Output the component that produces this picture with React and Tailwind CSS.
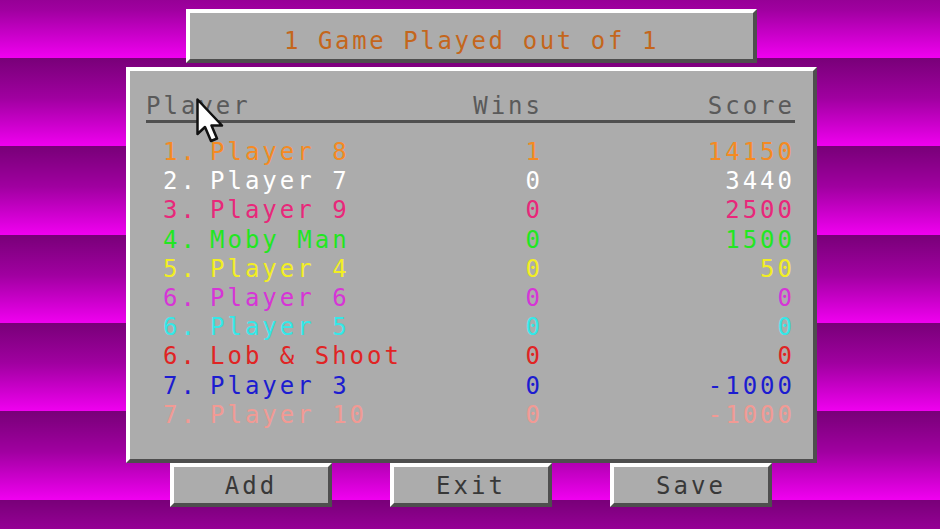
// Tournament results screen: striped backdrop, bevelled grey panels
const rows = [
  { rank: "1.", name: "Player 8", wins: "1", score: "14150", color: "text-[#f58a22]" },
  { rank: "2.", name: "Player 7", wins: "0", score: "3440", color: "text-white" },
  { rank: "3.", name: "Player 9", wins: "0", score: "2500", color: "text-[#e8287a]" },
  { rank: "4.", name: "Moby Man", wins: "0", score: "1500", color: "text-[#22e622]" },
  { rank: "5.", name: "Player 4", wins: "0", score: "50", color: "text-[#f2ee24]" },
  { rank: "6.", name: "Player 6", wins: "0", score: "0", color: "text-[#d635d6]" },
  { rank: "6.", name: "Player 5", wins: "0", score: "0", color: "text-[#34e8e8]" },
  { rank: "6.", name: "Lob & Shoot", wins: "0", score: "0", color: "text-[#e02424]" },
  { rank: "7.", name: "Player 3", wins: "0", score: "-1000", color: "text-[#1c1cd0]" },
  { rank: "7.", name: "Player 10", wins: "0", score: "-1000", color: "text-[#f29a94]" },
];

const bevel =
  "border-4 border-t-white border-l-white border-r-[#4e4e4e] border-b-[#4e4e4e] bg-[#acacac]";

function Button({ label }) {
  return (
    <div className={`${bevel} w-[162px] h-[44px] pt-[5px] text-center leading-[29px] text-[#383838]`}>
      {label}
    </div>
  );
}

function Cursor() {
  return (
    <svg className="absolute left-[196px] top-[98px]" width="30" height="46" viewBox="0 0 30 46">
      <polygon
        points="1.5,1.5 1.5,36 9,29 15,43 21,40.5 15.5,27.5 26,27.5"
        fill="#ffffff"
        stroke="#111111"
        strokeWidth="2.5"
        strokeLinejoin="round"
      />
    </svg>
  );
}

export default function App() {
  return (
    <div className="relative w-[940px] h-[529px] overflow-hidden bg-[repeating-linear-gradient(180deg,#780078_-30.3px,#a000a0_10px,#f000f0_58px)] font-['DejaVu_Sans_Mono',monospace] text-[24px] tracking-[3px]">
      <div className="flex flex-col items-start pt-[9px]">
        <div className={`${bevel} ml-[186px] w-[571px] h-[54px] pt-[14px] text-center leading-[29px] tracking-[2.6px] text-[#c4661c]`}>
          1 Game Played out of 1
        </div>

        <div className={`${bevel} mt-[4px] ml-[126px] w-[691px] h-[396px] pl-[16px] pt-[21px]`}>
          <div className="grid w-[649px] grid-cols-[64px_233px_100px_252px] border-b-[3px] border-[#505050] leading-[28px] text-[#5a5a5a]">
            <div className="col-span-2">Player</div>
            <div className="text-right">Wins</div>
            <div className="text-right">Score</div>
          </div>
          <div className="mt-[15px] flex flex-col">
            {rows.map((r, i) => (
              <div
                key={i}
                className={`grid w-[649px] grid-cols-[64px_233px_100px_252px] leading-[29.2px] ${r.color}`}
              >
                <div className="pl-[17px] whitespace-nowrap">{r.rank}</div>
                <div className="whitespace-nowrap">{r.name}</div>
                <div className="text-right">{r.wins}</div>
                <div className="text-right">{r.score}</div>
              </div>
            ))}
          </div>
        </div>

        <div className="ml-[170px] flex gap-[58px]">
          <Button label="Add" />
          <Button label="Exit" />
          <Button label="Save" />
        </div>
      </div>
      <Cursor />
    </div>
  );
}
